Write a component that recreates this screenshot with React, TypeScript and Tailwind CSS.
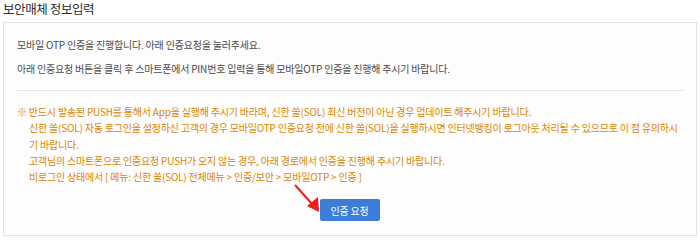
export default function App() {
  return (
    <div
      className="w-[700px] h-[241px] bg-white px-[3px] text-[10px]"
      style={{ fontFamily: '"Noto Sans CJK KR", "Noto Sans", sans-serif' }}
    >
      <h2 className="text-[12.5px] leading-[18px] text-[#2b2b2b] tracking-[-0.4px]">보안매체 정보입력</h2>
      <div className="relative mt-[4px] h-[214px] border border-[#e3e3e3] bg-[#fdfdfd] px-[13px]">
        <div className="pt-[10px] pb-[9px] text-[#4a4a4a] leading-[24px] tracking-[-0.2px]">
          <p>모바일 OTP 인증을 진행합니다. 아래 인증요청을 눌러주세요.</p>
          <p>아래 인증요청 버튼을 클릭 후 스마트폰에서 PIN번호 입력을 통해 모바일OTP 인증을 진행해 주시기 바랍니다.</p>
        </div>
        <div className="border-t border-[#e3e3e3] pt-[13px] pl-[12px] text-[#dc8400] leading-[16.3px] tracking-[-0.2px]">
          <p className="-indent-[12px]">※ 반드시 발송된 PUSH를 통해서 App을 실행해 주시기 바라며, 신한 쏠(SOL) 최신 버전이 아닌 경우 업데이트 해주시기 바랍니다.</p>
          <p>신한 쏠(SOL) 자동 로그인을 설정하신 고객의 경우 모바일OTP 인증요청 전에 신한 쏠(SOL)을 실행하시면 인터넷뱅킹이 로그아웃 처리될 수 있으므로 이 점 유의하시기 바랍니다.</p>
          <p>고객님의 스마트폰으로 인증요청 PUSH가 오지 않는 경우, 아래 경로에서 인증을 진행해 주시기 바랍니다.</p>
          <p>비로그인 상태에서 [ 메뉴: 신한 쏠(SOL) 전체메뉴 &gt; 인증/보안 &gt; 모바일OTP &gt; 인증 ]</p>
        </div>
        <div className="flex justify-center pt-[14px] pr-[1px]">
          <button className="h-[22px] w-[60px] rounded-[2px] bg-[#3b7dd8] text-[10px] tracking-[-0.2px] text-white">인증 요청</button>
        </div>
        <svg className="absolute left-[288px] top-[160px]" width="40" height="32" viewBox="0 0 40 32">
          <line x1="3" y1="2" x2="21" y2="22" stroke="#ee1c1c" strokeWidth="2" />
          <polygon points="27,29 15,23 26,14" fill="#ee1c1c" />
        </svg>
      </div>
    </div>
  );
}
